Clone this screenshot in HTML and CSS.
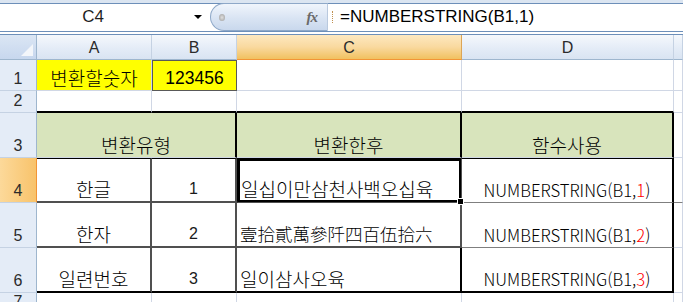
FILE: index.html
```html
<!DOCTYPE html>
<html lang="ko">
<head>
    <meta charset="UTF-8">
    <title>NUMBERSTRING</title>
    <link rel="stylesheet" href="styles.css">
</head>
<body>

<!-- formula bar: name box, fx button, formula -->
<div class="formulaBar">
    <div class="nameBox">
        <span class="cellName">C4</span>
        <span class="dropArrow"></span>
    </div>
    <div class="fxButton">
        <span class="fxDot"></span>
        <span class="fxText">fx</span>
    </div>
    <div class="formulaSep"></div>
    <div class="formulaText">=NUMBERSTRING(B1,1)</div>
</div>

<!-- sheet grid -->
<div class="sheet">
    <div class="corner"><span class="cornerTri"></span></div>
    <div class="colHead">A</div>
    <div class="colHead">B</div>
    <div class="colHead active">C</div>
    <div class="colHead">D</div>
    <div class="colHead"></div>

    <div class="rowHead">1</div>
    <div class="cell yellow center">변환할숫자</div>
    <div class="cell yellow center boxed num">123456</div>
    <div class="cell"></div>
    <div class="cell"></div>
    <div class="cell"></div>

    <div class="rowHead">2</div>
    <div class="cell topEdge"></div>
    <div class="cell topEdge"></div>
    <div class="cell topEdge"></div>
    <div class="cell topEdge"></div>
    <div class="cell"></div>

    <div class="rowHead">3</div>
    <div class="cell green center span2 edgeR">변환유형</div>
    <div class="cell green center edgeR">변환한후</div>
    <div class="cell green center edgeR">함수사용</div>
    <div class="cell"></div>

    <div class="rowHead active">4</div>
    <div class="cell center inner topLine">한글</div>
    <div class="cell center inner topLine edgeR num">1</div>
    <div class="cell left inner topLine edgeR selected">일십이만삼천사백오십육<span class="fillHandle"></span></div>
    <div class="cell center grayLine topLine edgeR latin">NUMBERSTRING(B1,<span class="red">1</span>)</div>
    <div class="cell grayLine"></div>

    <div class="rowHead">5</div>
    <div class="cell center inner">한자</div>
    <div class="cell center inner edgeR num">2</div>
    <div class="cell left inner edgeR hanja">壹拾貳萬參阡四百伍拾六</div>
    <div class="cell center grayLine edgeR latin">NUMBERSTRING(B1,<span class="red">2</span>)</div>
    <div class="cell"></div>

    <div class="rowHead">6</div>
    <div class="cell center inner bottomEdge">일련번호</div>
    <div class="cell center inner bottomEdge edgeR num">3</div>
    <div class="cell left bottomEdge edgeR">일이삼사오육</div>
    <div class="cell center bottomEdge edgeR latin">NUMBERSTRING(B1,<span class="red">3</span>)</div>
    <div class="cell"></div>

    <div class="rowHead">7</div>
    <div class="cell"></div>
    <div class="cell"></div>
    <div class="cell"></div>
    <div class="cell"></div>
    <div class="cell"></div>
</div>

</body>
</html>
```

FILE: styles.css
```css
body {
    margin: 0;
    width: 683px;
    height: 302px;
    overflow: hidden;
    background: #ffffff;
    font-family: "Noto Sans CJK KR", "Noto Sans", sans-serif;
}

/* formula bar */
.formulaBar {
    display: flex;
    align-items: center;
    height: 28px;
    border-top: 3px solid #dbe5f1;
    border-bottom: 4px double #6d8fb9;
    box-shadow: inset 0 1px 0 #6d8fb9;
    background: #ffffff;
}

.nameBox {
    display: flex;
    align-items: center;
    width: 205px;
    height: 100%;
}

.cellName {
    width: 186px;
    text-align: center;
    font-family: "Liberation Sans", sans-serif;
    font-size: 17px;
    color: #1f1f1f;
}

.dropArrow {
    width: 0;
    height: 0;
    border-left: 4px solid transparent;
    border-right: 4px solid transparent;
    border-top: 4px solid #000;
    margin-left: 8px;
}

.fxButton {
    display: flex;
    align-items: center;
    justify-content: space-between;
    width: 118px;
    height: 28px;
    margin-left: 5px;
    box-sizing: border-box;
    padding: 0 10px 0 8px;
    border: 1px solid #8ea8c8;
    border-right: 1px solid #b9c9de;
    border-radius: 14px 0 0 14px;
    background: linear-gradient(#f0f5fc, #d9e4f3 55%, #c9d8ed);
}

.fxDot {
    width: 6px;
    height: 7px;
    border-radius: 50%;
    background: radial-gradient(#e0e0e0, #9a9a9a);
}

.fxText {
    font-family: "Liberation Serif", serif;
    font-style: italic;
    font-weight: bold;
    font-size: 15px;
    color: #6a6a6a;
    letter-spacing: -1px;
}

.formulaSep {
    width: 1px;
    height: 12px;
    margin-left: 4px;
    border-left: 1px dotted #c09050;
}

.formulaText {
    margin-left: 6px;
    font-family: "Liberation Sans", sans-serif;
    font-size: 17px;
    color: #000;
}

/* sheet grid */
.sheet {
    display: grid;
    grid-template-columns: 37px 115px 85px 225px 212px 1fr;
    grid-template-rows: 25px 31px 22px 45px 45px 45px 45px 1fr;
    height: 267px;
}

.corner {
    position: relative;
    box-sizing: border-box;
    background: linear-gradient(#dbe6f4, #c7d7ee);
    border-right: 1px solid #9eb6ce;
    border-bottom: 1px solid #9eb6ce;
}

.cornerTri {
    position: absolute;
    right: 3px;
    bottom: 3px;
    width: 0;
    height: 0;
    border-left: 12px solid transparent;
    border-bottom: 12px solid #f3f6fa;
}

.colHead {
    display: flex;
    align-items: center;
    justify-content: center;
    box-sizing: border-box;
    padding-top: 1px;
    background: linear-gradient(#f5f8fc, #e4ecf7 55%, #d9e4f2);
    border-right: 1px solid #c5d2e3;
    border-bottom: 1px solid #9eb6ce;
    font-family: "Liberation Sans", sans-serif;
    font-size: 16px;
    color: #2b2b2b;
}

.colHead.active {
    background: linear-gradient(#fde8c0, #f9d99f 50%, #f1c15f);
    border-bottom: 1px solid #f29536;
    border-right: 1px solid #dca556;
}

.rowHead {
    display: flex;
    align-items: flex-end;
    justify-content: center;
    box-sizing: border-box;
    padding-bottom: 2px;
    background: #e4ecf7;
    border-right: 1px solid #9eb6ce;
    border-bottom: 1px solid #c5d2e3;
    font-family: "Liberation Sans", sans-serif;
    font-size: 16px;
    line-height: 18px;
    color: #2b2b2b;
}

.rowHead.active {
    background: linear-gradient(90deg, #fcd99a, #f8c36b);
    border-right: 1px solid #f29536;
}

.cell {
    position: relative;
    display: flex;
    align-items: flex-end;
    box-sizing: border-box;
    padding: 0 3px 0;
    border-right: 1px solid #d0d7e5;
    border-bottom: 1px solid #d0d7e5;
    font-size: 19px;
    font-weight: 300;
    line-height: 24px;
    color: #000;
    white-space: nowrap;
}

.latin {
    font-size: 16.7px;
    line-height: 22px;
    padding-bottom: 1px;
}

.num {
    font-family: "Liberation Sans", sans-serif;
    font-size: 16px;
    font-weight: normal;
    line-height: 20px;
    padding-bottom: 2px;
    color: #1a1a1a;
}

.center {
    justify-content: center;
}

.left {
    justify-content: flex-start;
}

.yellow {
    background: #ffff00;
}

.green {
    background: #d8e4bc;
}

.boxed {
    border: 1px solid #595959;
    font-size: 17.5px;
    color: #000;
}

.span2 {
    grid-column: span 2;
}

.topEdge {
    border-bottom: 2px solid #000;
}

.edgeR {
    border-right: 2px solid #000;
}

.inner {
    border-bottom: 2px solid #505050;
    border-right-color: #505050;
    border-right-width: 2px;
}

.topLine {
    border-top: 1px solid #000;
}

.grayLine {
    border-bottom: 1px solid #7f7f7f;
}

.bottomEdge {
    border-bottom: 2px solid #000;
}

.hanja {
    font-size: 17.5px;
}

.selected {
    outline: 2px solid #000;
    outline-offset: -3px;
    border-left: 1px solid #000;
}

.fillHandle {
    position: absolute;
    right: -4px;
    bottom: -4px;
    width: 5px;
    height: 5px;
    background: #000;
    border: 1px solid #fff;
    z-index: 1;
}

.red {
    color: #ff0000;
}
```
